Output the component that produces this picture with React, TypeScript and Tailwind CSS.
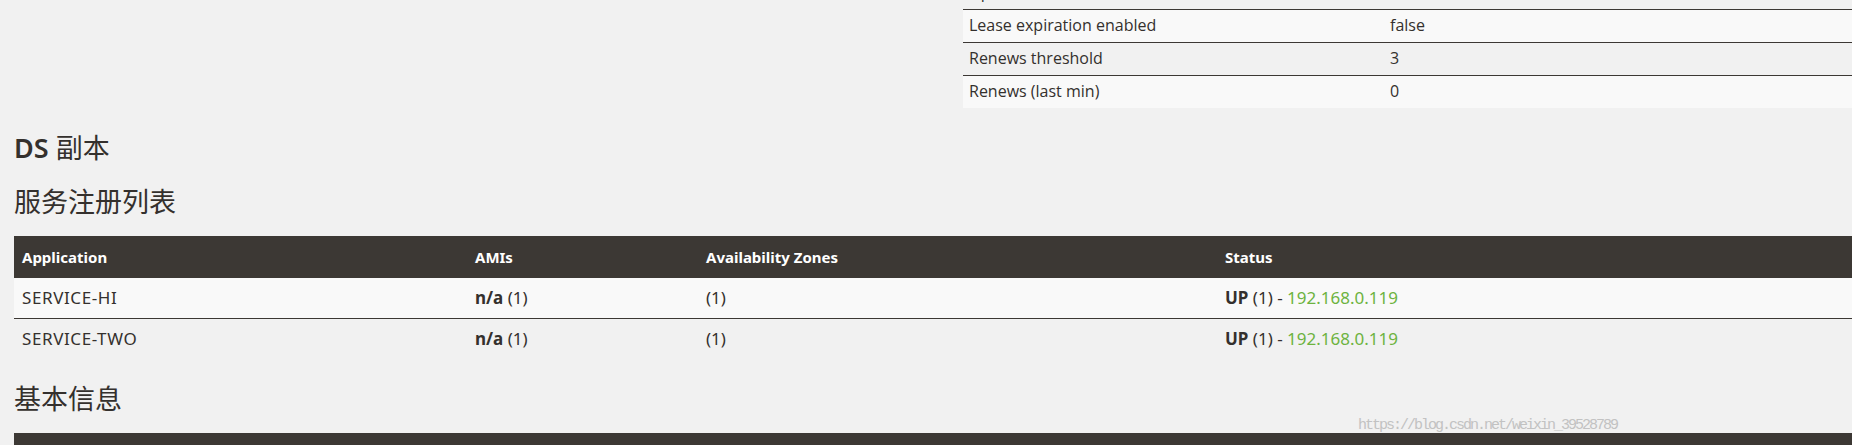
export default function App() {
  const topRows = [
    { k: "Uptime", v: "00:01", bg: "bg-transparent" },
    { k: "Lease expiration enabled", v: "false", bg: "bg-[#f9f9f9]" },
    { k: "Renews threshold", v: "3", bg: "bg-transparent" },
    { k: "Renews (last min)", v: "0", bg: "bg-[#f9f9f9]" },
  ];
  const apps = [
    { name: "SERVICE-HI", bg: "bg-[#f9f9f9]", border: "" },
    { name: "SERVICE-TWO", bg: "bg-transparent", border: "border-t border-[#3c3834]" },
  ];
  return (
    <div className="relative h-[445px] w-[1852px] overflow-hidden bg-[#f1f1f1] text-[#34302d]">
      {/* right-hand status table (cut off at top) */}
      <div className="flex pl-[14px]">
        <div className="w-[949px] shrink-0" />
        <div className="-mt-[24px] flex-1 font-['Open_Sans',sans-serif] text-[16px]">
          {topRows.map((r) => (
            <div key={r.k} className={`flex h-[33px] items-center border-t border-[#3c3834] pb-[3px] ${r.bg}`}>
              <div className="w-[421px] shrink-0 pl-[6px]">{r.k}</div>
              <div className="pl-[6px]">{r.v}</div>
            </div>
          ))}
        </div>
      </div>

      <div className="pl-[14px] font-['Noto_Sans','Noto_Sans_CJK_SC',sans-serif]">
        <h1 className="mt-[22px] text-[27px] leading-[36px] font-normal">
          <span className="font-semibold">DS</span> 副本
        </h1>
        <h1 className="mt-[18px] text-[27px] leading-[36px] font-normal">服务注册列表</h1>

        {/* registered instances table */}
        <div className="mt-[16px] text-[17px]">
          <div className="flex h-[42px] items-center bg-[#3c3834] text-[15px] font-bold text-white">
            <div className="w-[453px] shrink-0 pl-[8px]">Application</div>
            <div className="w-[231px] shrink-0 pl-[8px]">AMIs</div>
            <div className="w-[519px] shrink-0 pl-[8px]">Availability Zones</div>
            <div className="flex-1 pl-[8px]">Status</div>
          </div>
          {apps.map((a) => (
            <div key={a.name} className={`flex h-[40px] items-center ${a.bg} ${a.border}`}>
              <div className="w-[453px] shrink-0 pl-[8px] tracking-[0.6px]">{a.name}</div>
              <div className="w-[231px] shrink-0 pl-[8px]">
                <b className="font-bold">n/a</b> (1)
              </div>
              <div className="w-[519px] shrink-0 pl-[8px]">(1)</div>
              <div className="flex-1 pl-[8px]">
                <b className="font-bold">UP</b> (1) - <span className="text-[#6db33f]">192.168.0.119</span>
              </div>
            </div>
          ))}
        </div>

        <h1 className="mt-[23px] text-[27px] leading-[36px] font-normal">基本信息</h1>
        <div className="mt-[16px] flex h-[42px] items-center bg-[#3c3834] text-[15px] font-bold text-white">
          <div className="w-[1158px] shrink-0 pl-[8px]">Name</div>
          <div className="flex-1 pl-[8px]">Value</div>
        </div>
      </div>

      {/* watermark */}
      <div className="pointer-events-none absolute left-[1358px] top-[417px] font-['Liberation_Mono',monospace] text-[15px] leading-[18px] tracking-[-2px] text-[#c2c2c2]">
        https://blog.csdn.net/weixin_39528789
      </div>
    </div>
  );
}
